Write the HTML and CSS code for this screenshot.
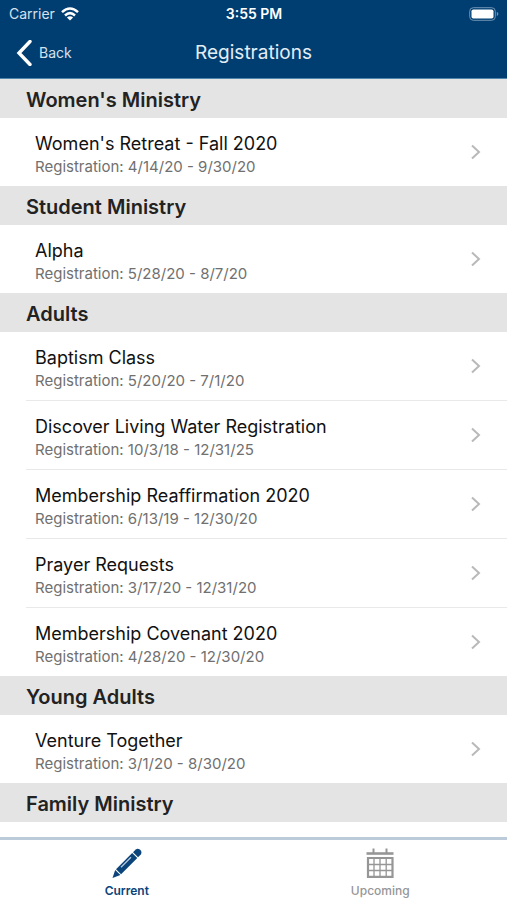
FILE: index.html
```html
<!DOCTYPE html>
<html lang="en">
<head>
<meta charset="utf-8">
<meta name="viewport" content="width=device-width, initial-scale=1">
<title>Registrations</title>
<link rel="stylesheet" href="styles.css">
</head>
<body>
<svg class="defs" aria-hidden="true">
  <symbol id="chevron" viewBox="0 0 10 16"><path d="M1 1.500 8 8l-7 6.500" fill="none" stroke="currentColor" stroke-width="2"/></symbol>
</svg>
<header class="top">
  <div class="status">
    <div class="carrier">
      <span>Carrier</span>
      <svg class="wifi" viewBox="0 0 18 14" aria-hidden="true">
        <g fill="none" stroke="currentColor" stroke-width="2.500"><path d="M1 5.200Q9-2.200 17 5.200"/><path d="M4 8.500Q9 3.800 14 8.500"/></g>
        <path d="M9 13.500 5.900 10.500Q9 8 12.100 10.500z" fill="currentColor"/>
      </svg>
    </div>
    <div class="time">3:55 PM</div>
    <svg class="battery" viewBox="0 0 30 14" aria-hidden="true">
      <rect x=".7" y=".7" width="25.600" height="12.600" rx="3.600" fill="none" stroke="#6f94b4" stroke-width="1"/>
      <rect x="2.500" y="2.500" width="22" height="9" rx="1.800" fill="#fff"/>
      <path d="M27.800 4.800q3.200 2.200 0 4.400z" fill="#6f94b4"/>
    </svg>
  </div>
  <nav class="navbar">
    <button class="back" type="button">
      <svg viewBox="0 0 16 26" aria-hidden="true"><path d="M14 1.500 3 13l11 11.500" fill="none" stroke="currentColor" stroke-width="3.400" stroke-linecap="round"/></svg>
      <span>Back</span>
    </button>
    <h1>Registrations</h1>
  </nav>
</header>
<main class="list">
  <h2>Women's Ministry</h2>
  <ul>
    <li><a href="#"><span class="text"><span class="name">Women's Retreat - Fall 2020</span><span class="dates">Registration: 4/14/20 - 9/30/20</span></span><svg class="chev" aria-hidden="true"><use href="#chevron"/></svg></a></li>
  </ul>
  <h2>Student Ministry</h2>
  <ul>
    <li><a href="#"><span class="text"><span class="name">Alpha</span><span class="dates">Registration: 5/28/20 - 8/7/20</span></span><svg class="chev" aria-hidden="true"><use href="#chevron"/></svg></a></li>
  </ul>
  <h2>Adults</h2>
  <ul>
    <li><a href="#"><span class="text"><span class="name">Baptism Class</span><span class="dates">Registration: 5/20/20 - 7/1/20</span></span><svg class="chev" aria-hidden="true"><use href="#chevron"/></svg></a></li>
    <li><a href="#"><span class="text"><span class="name">Discover Living Water Registration</span><span class="dates">Registration: 10/3/18 - 12/31/25</span></span><svg class="chev" aria-hidden="true"><use href="#chevron"/></svg></a></li>
    <li><a href="#"><span class="text"><span class="name">Membership Reaffirmation 2020</span><span class="dates">Registration: 6/13/19 - 12/30/20</span></span><svg class="chev" aria-hidden="true"><use href="#chevron"/></svg></a></li>
    <li><a href="#"><span class="text"><span class="name">Prayer Requests</span><span class="dates">Registration: 3/17/20 - 12/31/20</span></span><svg class="chev" aria-hidden="true"><use href="#chevron"/></svg></a></li>
    <li><a href="#"><span class="text"><span class="name">Membership Covenant 2020</span><span class="dates">Registration: 4/28/20 - 12/30/20</span></span><svg class="chev" aria-hidden="true"><use href="#chevron"/></svg></a></li>
  </ul>
  <h2>Young Adults</h2>
  <ul>
    <li><a href="#"><span class="text"><span class="name">Venture Together</span><span class="dates">Registration: 3/1/20 - 8/30/20</span></span><svg class="chev" aria-hidden="true"><use href="#chevron"/></svg></a></li>
  </ul>
  <h2>Family Ministry</h2>
</main>
<nav class="tabs">
  <button class="tab active" type="button">
    <svg viewBox="0 0 32 32" aria-hidden="true">
      <g fill="currentColor">
        <path d="M5 22.200 21.200 6l5.100 5.100L10.100 27.300z"/>
        <path d="m4.200 22.900 5.200 5.200L1.500 31z"/>
        <path d="m22 5.200 2.800-2.800q2-1.600 4.300.4t.7 4.700L27.100 10.300z"/>
      </g>
      <path d="m10 20.300 10-10" stroke="#b9cbdc" stroke-width="1.300" fill="none"/>
    </svg>
    <span>Current</span>
  </button>
  <button class="tab" type="button">
    <svg viewBox="0 0 32 32" aria-hidden="true">
      <g fill="none" stroke="currentColor">
        <path d="M9.500 1.500v5M22.500 1.500v5" stroke-width="2"/>
        <path d="M2.500 6.500h27" stroke-width="2.600"/>
        <path d="M4 11h24.500v18.800H4z" stroke-width="2.200"/>
        <path d="M10 11v18M16 11v18M22.200 11v18M4 17.500h24M4 23.500h24" stroke-width="1.300"/>
      </g>
    </svg>
    <span>Upcoming</span>
  </button>
</nav>
</body>
</html>
```
FILE: styles.css
```css
* { box-sizing: border-box; }
body {
  margin: 0;
  height: 100vh;
  display: flex;
  flex-direction: column;
  background: #fff;
  color: #111;
  font-family: Inter, "Liberation Sans", sans-serif;
}
button { border: 0; padding: 0; background: none; font: inherit; color: inherit; cursor: pointer; }
a { color: inherit; text-decoration: none; }
h1, h2, ul { margin: 0; padding: 0; }
.defs { display: none; }

.top { background: #003e71; color: #fff; flex: none; border-bottom: 1px solid #4f86ab; }
.status {
  display: grid;
  grid-template-columns: 1fr auto 1fr;
  align-items: center;
  height: 27px;
  padding: 0 8px 0 9px;
  font-size: 14px;
}
.carrier { display: flex; align-items: center; gap: 6px; color: #d5e2ee; }
.wifi { width: 18px; height: 14px; color: #fff; }
.time { font-weight: 600; }
.battery { width: 30px; height: 14px; justify-self: end; }
.navbar {
  display: grid;
  grid-template-columns: 1fr auto 1fr;
  align-items: center;
  height: 51px;
  padding: 0 16px;
}
.back { display: flex; align-items: center; gap: 7px; justify-self: start; font-size: 14px; color: #d5e2ee; }
.back svg { width: 16px; height: 26px; color: #fff; }
h1 { font-size: 19px; font-weight: 400; color: #e3edf5; }

.list { flex: 1; min-height: 0; overflow: hidden auto; scrollbar-width: none; }
h2 {
  padding: 3px 26px 0;
  background: #e4e4e4;
  color: #222;
  font-size: 20px;
  font-weight: 600;
  line-height: 36px;
}
ul { list-style: none; }
li { padding-left: 26px; }
li a {
  display: flex;
  align-items: center;
  justify-content: space-between;
  height: 68px;
  padding: 0 26px 0 9px;
}
li + li a { height: 69px; border-top: 1px solid #e9e9e9; }
.text { display: flex; flex-direction: column; padding-top: 6px; }
.name { font-size: 18px; line-height: 24px; }
.dates { font-size: 15px; line-height: 22px; color: #707070; }
.chev { width: 10px; height: 16px; color: #b9b9b9; }

.tabs { display: flex; flex: none; height: 63px; border-top: 3px solid #bccbd9; background: #fff; }
.tab {
  flex: 1;
  display: flex;
  flex-direction: column;
  align-items: center;
  gap: 3px;
  padding-top: 7px;
  color: #969696;
  font-size: 12px;
  font-weight: 500;
  line-height: 18px;
}
.tab svg { width: 32px; height: 32px; }
.tab.active { color: #0b447a; font-weight: 600; }
```
